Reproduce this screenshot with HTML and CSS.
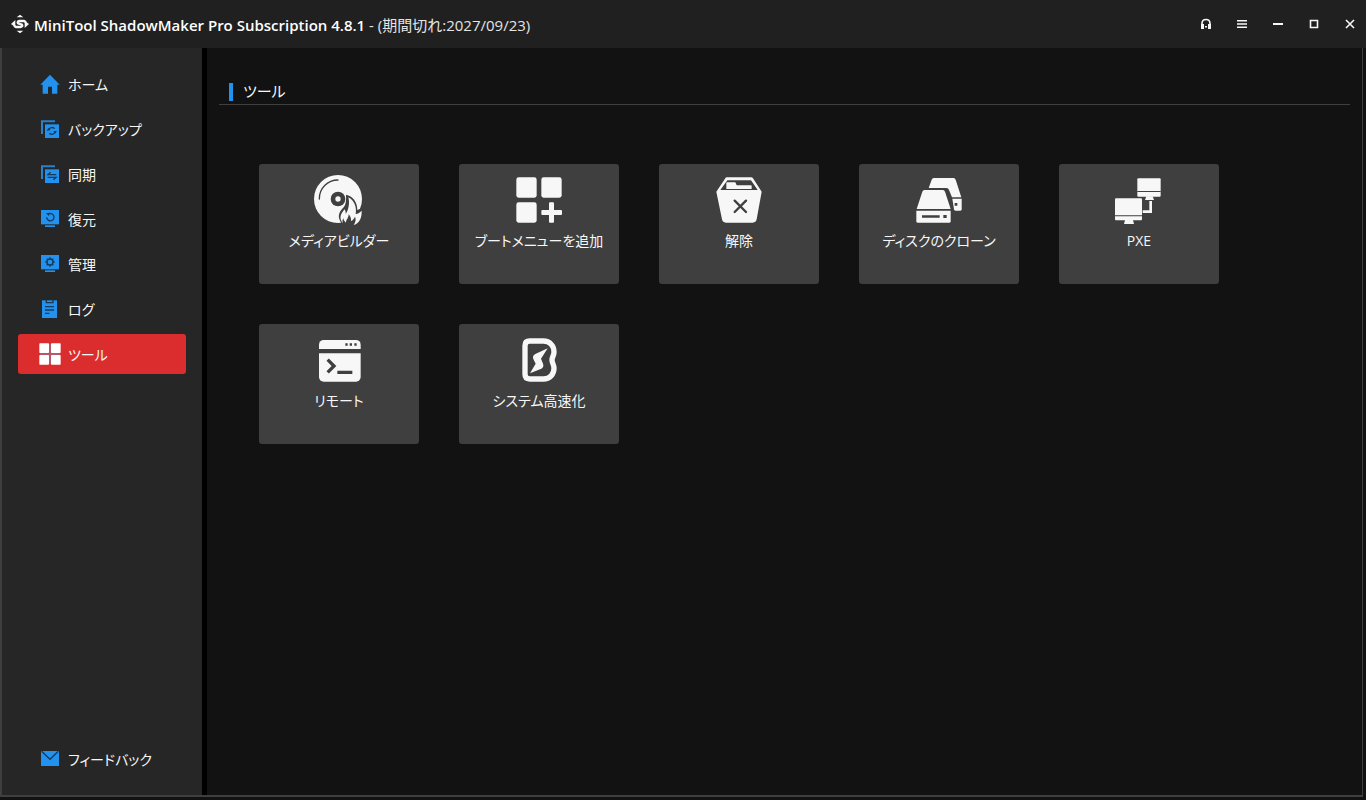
FILE: index.html
```
<!DOCTYPE html>
<html lang="ja">
<head>
    <meta charset="UTF-8">
    <meta name="viewport" content="width=device-width, initial-scale=1.0">
    <title>MiniTool ShadowMaker</title>
    <link rel="stylesheet" href="styles.css">
</head>
<body>
    <header class="titlebar">
        <svg class="logo" viewBox="0 0 60 60">
            <path d="M30 2L40 10H20ZM30 58L40 50H20Z"/>
            <path d="M3 30L16 18V40ZM57 30L44 20V42Z"/>
            <path class="swirl" d="M48 25L42 21H28Q21 22 24 28L36 32Q39 38 32 39H18L12 35"/>
        </svg>
        <h1><b>MiniTool ShadowMaker Pro Subscription 4.8.1</b> - (期間切れ:2027/09/23)</h1>
        <div class="window-buttons">
            <button type="button" aria-label="サポート">
                <svg viewBox="0 0 12 12">
                    <path class="line thin" d="M2 8V5.500C2 .2 10 .2 10 5.500V8"/>
                    <path d="M1 6H4V11H1ZM8 6H11V11H8ZM5 8H7V9.500H5Z"/>
                </svg>
            </button>
            <button type="button" aria-label="メニュー">
                <svg viewBox="0 0 12 12"><path d="M1 2H11V3.500H1ZM1 5.300H11V6.800H1ZM1 8.600H11V10.100H1Z"/></svg>
            </button>
            <button type="button" aria-label="最小化">
                <svg viewBox="0 0 12 12"><path d="M1 5H11V7H1Z"/></svg>
            </button>
            <button type="button" aria-label="最大化">
                <svg viewBox="0 0 12 12"><path class="line thin" d="M2.500 2.500H9.500V9.500H2.500Z"/></svg>
            </button>
            <button type="button" aria-label="閉じる">
                <svg viewBox="0 0 12 12"><path class="line thin" d="M2 2L10 10M10 2L2 10"/></svg>
            </button>
        </div>
    </header>

    <div class="container">
        <nav class="sidebar">
            <a href="#home">
                <svg viewBox="0 0 60 60"><path d="M30 2L59 32H52V59H36V38H24V59H8V32H1Z"/></svg>
                ホーム
            </a>
            <a href="#backup">
                <svg viewBox="0 0 60 60">
                    <path class="back" d="M6 45V7H45"/>
                    <rect x="15" y="16" width="42" height="41"/>
                    <path class="mark" d="M26 32A11 11 0 0 1 44 29M46 38A11 11 0 0 1 28 43"/>
                    <path class="mark-fill" d="M20 35L25 27L32 34ZM40 36L51 36L46 43Z"/>
                </svg>
                バックアップ
            </a>
            <a href="#sync">
                <svg viewBox="0 0 60 60">
                    <path class="back" d="M6 45V7H45"/>
                    <rect x="15" y="16" width="42" height="41"/>
                    <path class="mark" d="M49 32H24L32 25M23 40H48L40 47"/>
                </svg>
                同期
            </a>
            <a href="#restore">
                <svg viewBox="0 0 60 60">
                    <rect x="3" y="3" width="54" height="43"/>
                    <rect x="15" y="49" width="30" height="5"/>
                    <path class="mark" d="M24 16A11 11 0 1 1 20 25"/>
                    <path class="mark-fill" d="M18 13L29 11L27 21Z"/>
                </svg>
                復元
            </a>
            <a href="#manage">
                <svg viewBox="0 0 60 60">
                    <rect x="3" y="3" width="54" height="43"/>
                    <rect x="15" y="49" width="30" height="5"/>
                    <circle class="mark" cx="30" cy="24" r="9"/>
                    <path class="mark" d="M30 10V15M30 33V38M16 24H21M39 24H44M20 14L24 18M36 30L40 34M40 14L36 18M24 30L20 34"/>
                </svg>
                管理
            </a>
            <a href="#log">
                <svg viewBox="0 0 60 60">
                    <rect x="6" y="4" width="45" height="53"/>
                    <path class="mark" d="M19 3V11H39V3M15 23H42M15 33H42M15 43H28"/>
                </svg>
                ログ
            </a>
            <a href="#tools" class="active">
                <svg viewBox="0 0 60 60">
                    <path class="cross" d="M30 0V60M0 30H60"/>
                    <rect x="-2" y="-2" width="29" height="29" rx="2"/>
                    <rect x="33" y="-2" width="29" height="29" rx="2"/>
                    <rect x="-2" y="33" width="29" height="29" rx="2"/>
                    <rect x="33" y="33" width="29" height="29" rx="2"/>
                </svg>
                ツール
            </a>
            <a href="#feedback" class="feedback">
                <svg viewBox="0 0 60 60">
                    <rect x="3" y="6" width="54" height="45"/>
                    <path class="mark" d="M5 7L30 31L55 7"/>
                </svg>
                フィードバック
            </a>
        </nav>

        <main class="content">
            <h2>ツール</h2>
            <div class="tools">
                <button type="button" class="tool">
                    <svg viewBox="0 0 156 156">
                        <circle cx="75" cy="75" r="72"/>
                        <path class="line thin" d="M19 75A56 56 0 0 1 75 18"/>
                        <circle class="cut" cx="75" cy="75" r="22"/>
                        <circle cx="75" cy="75" r="8"/>
                        <path class="cut" d="M88 150C70 130 78 113 92 100C99 91 100 78 99 62C119 66 133 83 133 108C139 107 142 104 149 99V160H90Z"/>
                        <path d="M90 148C76 132 84 118 95 106C98 113 99 117 98 121C106 108 111 89 106 70C123 79 132 98 128 120C136 119 140 115 146 110C147 129 140 148 122 153C129 143 129 134 126 128C123 135 119 139 114 141C115 132 111 126 107 121C107 132 99 137 99 146C94 141 91 138 91 132C88 138 88 143 90 148Z"/>
                    </svg>
                    メディアビルダー
                </button>
                <button type="button" class="tool">
                    <svg viewBox="0 0 156 156">
                        <rect x="10" y="10" width="61" height="61" rx="7"/>
                        <rect x="85" y="10" width="61" height="61" rx="7"/>
                        <rect x="10" y="85" width="61" height="61" rx="7"/>
                        <rect x="85" y="108" width="62" height="15" rx="3"/>
                        <rect x="108" y="85" width="15" height="61" rx="3"/>
                    </svg>
                    ブートメニューを追加
                </button>
                <button type="button" class="tool">
                    <svg viewBox="0 0 156 156">
                        <path d="M42 10H114Q118 10 121 14L146 53L131 136Q129 146 119 146H39Q29 146 27 136L10 53L36 14Q38 10 42 10Z"/>
                        <path class="cut" d="M43 19H114L134 48H22Z"/>
                        <path d="M40 45V27Q40 25 42 25H67L71 34H114Q116 34 116 36V45Z"/>
                        <path class="line" d="M65 80L99 114M99 80L65 114"/>
                    </svg>
                    解除
                </button>
                <button type="button" class="tool">
                    <svg viewBox="0 0 156 156">
                        <path d="M62 12H122Q126 12 128 17L145 70H117L107 46Q105 42 99 42H47L56 17Q58 12 62 12Z"/>
                        <path d="M118 74H146V106Q146 110 142 110H127Q124 110 123 106Z"/>
                        <path d="M34 48H90Q94 48 96 53L113 105H11L28 53Q30 48 34 48Z"/>
                        <path d="M10 110H113V142Q113 146 109 146H14Q10 146 10 142Z"/>
                        <path class="cut" d="M27 124H80V131H27ZM91 123H101V132H91ZM125 87H133V95H125Z"/>
                    </svg>
                    ディスクのクローン
                </button>
                <button type="button" class="tool">
                    <svg viewBox="0 0 156 156">
                        <rect x="73" y="13" width="70" height="55" rx="3"/>
                        <path d="M100 67H119L123 78H96Z"/>
                        <rect x="6" y="73" width="81" height="66" rx="3"/>
                        <path d="M36 138H60L63 150H33Z"/>
                        <path class="cut" d="M73 51H143V54H73ZM6 124H87V127H6Z"/>
                        <path d="M109 81H117V117H89V109H109Z"/>
                    </svg>
                    PXE
                </button>
                <button type="button" class="tool">
                    <svg viewBox="0 0 156 156">
                        <rect x="18" y="18" width="125" height="125" rx="14"/>
                        <path class="cut" d="M17 45H144V58H17ZM97 28H104V35H97ZM110 28H117V35H110ZM124 28H131V35H124ZM73 110H118V120H73Z"/>
                        <path class="line thick" d="M44 77L63 96L44 115"/>
                    </svg>
                    リモート
                </button>
                <button type="button" class="tool">
                    <svg viewBox="0 0 156 156">
                        <path class="outline" d="M50 21H91C111 21 123 36 123 54C123 65 117 69 117 78C117 88 123 91 123 103C123 121 111 135 91 135H50Q36 135 36 121V35Q36 21 50 21Z"/>
                        <path d="M104 43L67 60Q57 66 61 75L68 89L51 118L85 104Q94 98 90 89L84 74Z"/>
                    </svg>
                    システム高速化
                </button>
            </div>
        </main>
    </div>
</body>
</html>
```
FILE: styles.css
```
* {
    box-sizing: border-box;
}
body {
    display: flex;
    flex-direction: column;
    min-height: 100vh;
    margin: 0;
    padding-bottom: 3px;
    background-color: #121212;
    color: #f7f7f7;
    font-family: "Open Sans", "Noto Sans CJK JP", sans-serif;
    font-size: 14px;
    font-feature-settings: "palt";
}
button {
    padding: 0;
    border: none;
    background: none;
    color: inherit;
    font: inherit;
    font-feature-settings: inherit;
    cursor: pointer;
}
svg {
    flex: none;
    fill: currentColor;
    overflow: visible;
}

/* title bar */
.titlebar {
    display: flex;
    align-items: center;
    height: 48px;
    padding-left: 10px;
    background-color: #202020;
}
.logo {
    width: 20px;
    height: 20px;
    margin-right: 4px;
}
.logo .swirl {
    fill: none;
    stroke: currentColor;
    stroke-width: 7;
}
.titlebar h1 {
    margin: 0;
    font-size: 15px;
    font-weight: normal;
    color: #e4e4e4;
}
.titlebar b {
    font-weight: 600;
    color: #fff;
}
.window-buttons {
    display: flex;
    gap: 4px;
    margin-left: auto;
}
.window-buttons button {
    display: flex;
    align-items: center;
    justify-content: center;
    width: 32px;
    height: 32px;
}
.window-buttons svg {
    width: 12px;
    height: 12px;
}
.window-buttons .line {
    fill: none;
    stroke: currentColor;
    stroke-width: 1.6;
}

/* frame */
.container {
    display: flex;
    flex: 1;
    margin-right: 3px;
    border: solid #3f3f3f;
    border-width: 0 1px 2px 2px;
}
.sidebar {
    display: flex;
    flex: none;
    flex-direction: column;
    gap: 5px;
    width: 205px;
    padding: 16px;
    border-right: 5px solid #000;
    background-color: #262626;
}
.sidebar a {
    display: flex;
    align-items: center;
    gap: 8px;
    height: 40px;
    padding-left: 22px;
    border-radius: 3px;
    color: #f7f7f7;
    text-decoration: none;
}
.sidebar .active {
    background-color: #db2d2e;
}
.sidebar .feedback {
    margin-top: auto;
}
.sidebar svg {
    width: 20px;
    height: 20px;
    fill: #2292ee;
}
.sidebar .active svg {
    fill: #fff;
}
.sidebar .cross {
    stroke: #b5586a;
    stroke-width: 7;
}
.sidebar .back {
    fill: none;
    stroke: #2b80c8;
    stroke-width: 6;
}
.sidebar .mark {
    fill: none;
    stroke: #173a58;
    stroke-width: 4;
}
.sidebar .mark-fill {
    fill: #173a58;
}

/* tools */
.content {
    flex: 1;
    padding: 32px 12px;
}
.content h2 {
    display: flex;
    align-items: center;
    gap: 10px;
    height: 25px;
    margin: 0 0 59px;
    padding: 0 0 3px 10px;
    border-bottom: 1px solid #3f3f3f;
    font-size: 15px;
    font-weight: normal;
}
.content h2::before {
    content: "";
    align-self: flex-end;
    width: 4px;
    height: 18px;
    background-color: #2292ee;
}
.tools {
    display: flex;
    flex-wrap: wrap;
    gap: 40px;
    padding: 0 40px;
}
.tool {
    display: flex;
    flex-direction: column;
    align-items: center;
    gap: 3px;
    width: 160px;
    height: 120px;
    padding-top: 10px;
    border-radius: 3px;
    background-color: #3f3f3f;
    line-height: 24px;
}
.tool:hover {
    background-color: #4a4a4a;
}
.tool svg {
    width: 52px;
    height: 52px;
}
.tool .cut {
    fill: #3f3f3f;
}
.tool .line {
    fill: none;
    stroke: #3f3f3f;
    stroke-width: 7;
    stroke-linecap: round;
}
.tool .thin {
    stroke-width: 4;
}
.tool .thick {
    stroke-width: 10;
    stroke-linecap: butt;
}
.tool .outline {
    fill: none;
    stroke: currentColor;
    stroke-width: 16;
}
```
